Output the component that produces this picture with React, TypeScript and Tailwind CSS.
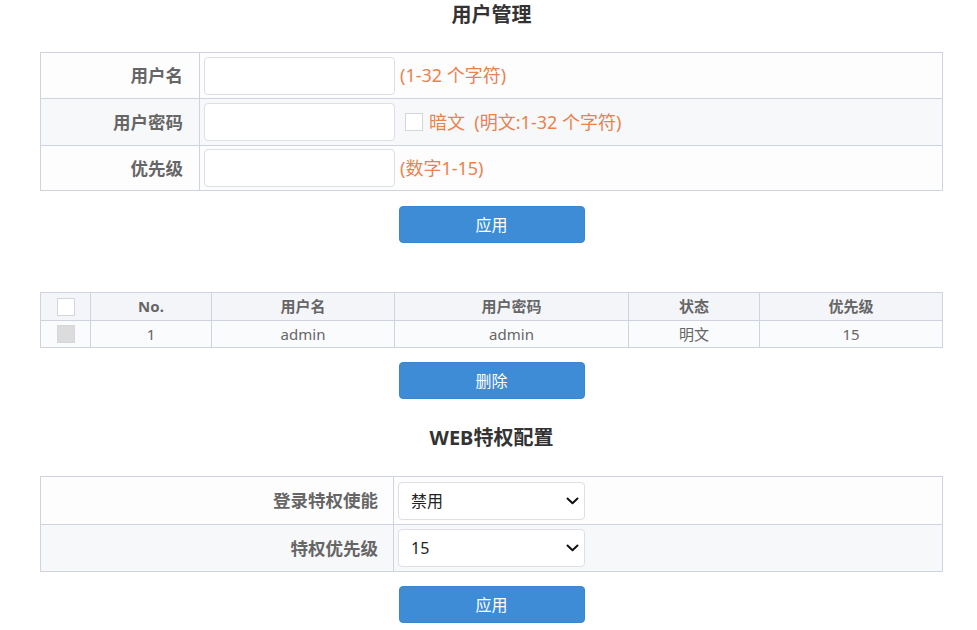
import React from "react";

const font = { fontFamily: '"Noto Sans", "Noto Sans CJK SC", sans-serif' };

function Chevron() {
  return (
    <svg width="13" height="8" viewBox="0 0 13 8" className="absolute right-[5px] top-1/2 -translate-y-1/2 pointer-events-none">
      <path d="M1.5 1.5 L6.5 6.2 L11.5 1.5" fill="none" stroke="#111" strokeWidth="2" strokeLinecap="round" strokeLinejoin="round" />
    </svg>
  );
}

function Select({ value }: { value: string }) {
  return (
    <div className="relative w-[187px] h-[38px] border border-[#dcdfe6] rounded-[4px] bg-white flex items-center pl-[12px] text-[16px] text-[#222]">
      {value}
      <Chevron />
    </div>
  );
}

function Btn({ label }: { label: string }) {
  return (
    <div className="flex justify-center">
      <button className="w-[186px] h-[37px] rounded-[4px] bg-[#3d8cd5] text-white text-[16px] border border-[#3a86cc]">{label}</button>
    </div>
  );
}

export default function App() {
  return (
    <div className="w-[977px] h-[630px] bg-white overflow-hidden" style={font}>
      <div className="w-[903px] ml-[40px]">
        <div className="h-[52px] pt-[2px] text-center text-[20px] leading-[26px] font-bold text-[#333]">用户管理</div>

        <div className="border border-[#cfd3e0]">
          <div className="flex h-[45px] bg-[#fdfdfe]">
            <div className="w-[159px] border-r border-[#cfd3e0] flex items-center justify-end pr-[16px] text-[17.5px] font-bold text-[#666]">用户名</div>
            <div className="flex items-center pl-[4px]">
              <div className="w-[191px] h-[38px] border border-[#dcdfe6] rounded-[4px] bg-white" />
              <span className="ml-[5px] text-[18px] text-[#e8834d]">(1-32 个字符)</span>
            </div>
          </div>
          <div className="flex h-[47px] bg-[#f7f8fa] border-t border-[#cfd3e0]">
            <div className="w-[159px] border-r border-[#cfd3e0] flex items-center justify-end pr-[16px] text-[17.5px] font-bold text-[#666]">用户密码</div>
            <div className="flex items-center pl-[4px]">
              <div className="w-[191px] h-[38px] border border-[#dcdfe6] rounded-[4px] bg-white" />
              <div className="ml-[10px] w-[18px] h-[18px] border border-[#d4d6dc] bg-white" />
              <span className="ml-[6px] text-[18px] text-[#e8834d]">暗文&nbsp;&nbsp;(明文:1-32 个字符)</span>
            </div>
          </div>
          <div className="flex h-[45px] bg-[#fdfdfe] border-t border-[#cfd3e0]">
            <div className="w-[159px] border-r border-[#cfd3e0] flex items-center justify-end pr-[16px] text-[17.5px] font-bold text-[#666]">优先级</div>
            <div className="flex items-center pl-[4px]">
              <div className="w-[191px] h-[38px] border border-[#dcdfe6] rounded-[4px] bg-white" />
              <span className="ml-[5px] text-[18px] text-[#e8834d]">(数字1-15)</span>
            </div>
          </div>
        </div>

        <div className="mt-[15px]">
          <Btn label="应用" />
        </div>

        <div className="mt-[49px] border border-[#cfd3e0] text-[15px]">
          <div className="flex h-[27px] bg-[#f4f5f9] font-bold text-[#666]">
            <div className="w-[50px] border-r border-[#cfd3e0] flex items-center justify-center">
              <div className="w-[18px] h-[18px] border border-[#d4d6dc] bg-white" />
            </div>
            <div className="w-[121px] border-r border-[#cfd3e0] flex items-center justify-center">No.</div>
            <div className="w-[183px] border-r border-[#cfd3e0] flex items-center justify-center">用户名</div>
            <div className="w-[234px] border-r border-[#cfd3e0] flex items-center justify-center">用户密码</div>
            <div className="w-[131px] border-r border-[#cfd3e0] flex items-center justify-center">状态</div>
            <div className="flex-1 flex items-center justify-center">优先级</div>
          </div>
          <div className="flex h-[27px] bg-[#fafbfc] border-t border-[#cfd3e0] text-[#666]">
            <div className="w-[50px] border-r border-[#cfd3e0] flex items-center justify-center">
              <div className="w-[18px] h-[18px] border border-[#d4d6dc] bg-[#dcdcdc]" />
            </div>
            <div className="w-[121px] border-r border-[#cfd3e0] flex items-center justify-center">1</div>
            <div className="w-[183px] border-r border-[#cfd3e0] flex items-center justify-center">admin</div>
            <div className="w-[234px] border-r border-[#cfd3e0] flex items-center justify-center">admin</div>
            <div className="w-[131px] border-r border-[#cfd3e0] flex items-center justify-center">明文</div>
            <div className="flex-1 flex items-center justify-center">15</div>
          </div>
        </div>

        <div className="mt-[14px]">
          <Btn label="删除" />
        </div>

        <div className="h-[77px] pt-[26px] text-center text-[20px] leading-[26px] font-bold text-[#333]">WEB特权配置</div>

        <div className="border border-[#cfd3e0]">
          <div className="flex h-[47px] bg-[#fdfdfe]">
            <div className="w-[353px] border-r border-[#cfd3e0] flex items-center justify-end pr-[15px] text-[17.5px] font-bold text-[#666]">登录特权使能</div>
            <div className="flex items-center pl-[4px]">
              <Select value="禁用" />
            </div>
          </div>
          <div className="flex h-[47px] bg-[#f7f8fa] border-t border-[#cfd3e0]">
            <div className="w-[353px] border-r border-[#cfd3e0] flex items-center justify-end pr-[15px] text-[17.5px] font-bold text-[#666]">特权优先级</div>
            <div className="flex items-center pl-[4px]">
              <Select value="15" />
            </div>
          </div>
        </div>

        <div className="mt-[14px]">
          <Btn label="应用" />
        </div>
      </div>
    </div>
  );
}
